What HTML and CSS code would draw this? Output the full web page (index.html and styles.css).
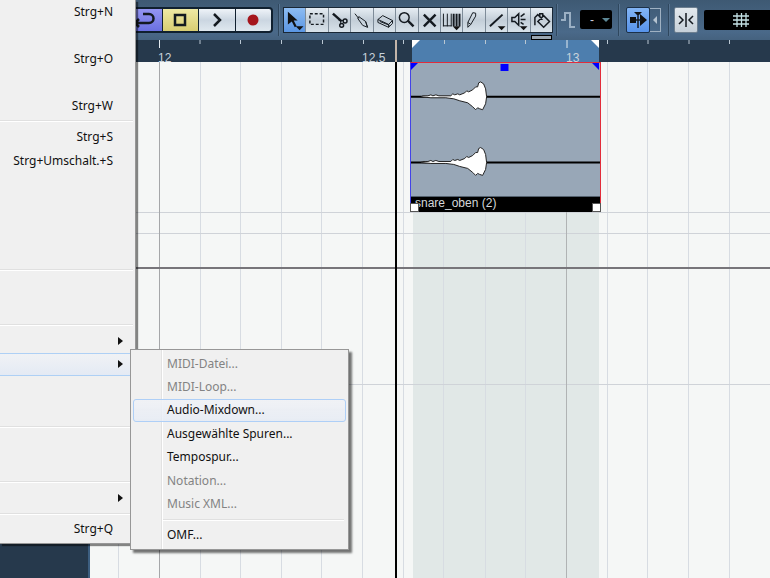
FILE: index.html
```html
<!DOCTYPE html>
<html lang="de">
<head>
<meta charset="utf-8">
<title>Arrangement</title>
<link rel="stylesheet" href="styles.css">
</head>
<body>
<div class="app">
  <header class="toolbar">
    <div class="transport">
      <button class="loop" aria-label="Cycle"><svg width="26" height="19" viewBox="0 0 26 19"><path d="M4 13h14a4 4 0 0 0 0-9H12M8 9l-4 4 4 4" class="s25"/></svg></button>
      <button class="stop" aria-label="Stop"><svg width="14" height="14" viewBox="0 0 14 14"><path d="M2 2h10v10H2z" class="s25"/></svg></button>
      <button class="play" aria-label="Start"><svg width="12" height="14" viewBox="0 0 12 14"><path d="M3 1l6 6-6 6" class="s25"/></svg></button>
      <button class="record" aria-label="Aufnahme"><svg width="12" height="12" viewBox="0 0 12 12"><circle cx="6" cy="6" r="5.500" fill="#a5151c"/></svg></button>
    </div>
    <i class="divider"></i>
    <div class="tools">
      <button class="active" aria-label="Objektauswahl"><svg viewBox="0 0 22 21"><path d="M4 2l10 9H10l3 6-2 1-3-6-4 3z" fill="#111"/><path d="M12 17h8l-4 4z" fill="#111"/></svg></button>
      <button aria-label="Auswahlbereich"><svg viewBox="0 0 22 21"><path d="M4 4h14v11H4z" class="s15" stroke-dasharray="3 2"/></svg></button>
      <button aria-label="Trennen"><svg viewBox="0 0 22 21"><path d="M4 4l9 8" class="s25"/><circle cx="16.500" cy="11.500" r="2" class="s15"/><circle cx="13" cy="16" r="2" class="s15"/><path d="M10 11h5M12 11v4" class="s1"/></svg></button>
      <button aria-label="Kleben"><svg viewBox="0 0 22 21"><path d="M4 4l4 5M8 7l7 5 2 6-5-2-5-7zM15 12l2 6" class="s1"/></svg></button>
      <button aria-label="Löschen"><svg viewBox="0 0 22 21"><path d="M4 10l5-4 10 5-4 4zM4 10v3l11 5v-3M15 18l4-4v-3M6 12l10 4" class="s1"/></svg></button>
      <button aria-label="Zoom"><svg viewBox="0 0 22 21"><circle cx="8.500" cy="8" r="5" class="s15"/><path d="M12 11l6 6" class="s25"/></svg></button>
      <button aria-label="Stummschalten"><svg viewBox="0 0 22 21"><path d="M5 5l12 12M17 5L5 17" class="s25"/></svg></button>
      <button aria-label="Time Warp"><svg viewBox="0 0 22 21"><path d="M2.500 4v13M6.500 4v13M10.500 4v13M2 16.500h9" class="s1"/><path d="M13 4v13M16 4v13M19 4v13" class="s2"/><path d="M12 17h8l-4 4z" fill="#111"/></svg></button>
      <button aria-label="Stift"><svg viewBox="0 0 22 21"><path d="M5 13l5-10 3 .5v3L8 15l-3 3zM5 13l3 2" class="s1"/></svg></button>
      <button aria-label="Linie"><svg viewBox="0 0 22 21"><path d="M4 17L17 5" class="s2"/><path d="M12 17h8l-4 4z" fill="#111"/></svg></button>
      <button aria-label="Wiedergabe"><svg viewBox="0 0 22 21"><path d="M4 8h3l4-4v12l-4-4H4zM13 7l4-3M13 10h5M13 13l3 2" class="s15"/><path d="M12 17h8l-4 4z" fill="#111"/></svg></button>
      <button aria-label="Farbe"><svg viewBox="0 0 22 21"><path d="M7 12l6-6 6 6-6 6zM4 16V8l3-3 5 5M9 8V4h3v3" class="s15"/></svg><span class="swatch"></span></button>
    </div>
    <i class="divider"></i>
    <svg class="pulse" width="16" height="18" viewBox="0 0 16 18"><path d="M1 9h4V2h5v14h5" fill="none" stroke="#9bb0c4" stroke-width="2"/></svg>
    <div class="nudge">
      <select aria-label="Farbe wählen"><option>-</option></select>
      <svg width="8" height="4" viewBox="0 0 8 4"><path d="M0 0h8L4 4z" fill="#5c8796"/></svg>
    </div>
    <i class="divider"></i>
    <button class="key scroll" aria-label="Autoscroll"><svg width="20" height="20" viewBox="0 0 20 20"><path d="M2 7h6v6H2zM12 4l7 6-7 6z" fill="#111"/><path d="M6 2h8l-3 3H9z" fill="#111"/><path d="M10 3v15M8 10h6" class="s15"/></svg></button>
    <button class="suspend" aria-label="Autoscroll anhalten"><svg width="6" height="8" viewBox="0 0 6 8"><path d="M5 0v8L1 4z" fill="#b5c3d0"/></svg></button>
    <i class="divider"></i>
    <button class="key snap" aria-label="Raster"><svg width="18" height="16" viewBox="0 0 18 16"><path d="M9 1v14M2 4l4 4-4 4M16 4l-4 4 4 4" class="s15"/></svg></button>
    <button class="gridtype" aria-label="Rastertyp"><svg width="18" height="16" viewBox="0 0 18 16"><path d="M5 1v14M9.500 1v14M14 1v14M1 4h16M1 8h16M1 12h16" fill="none" stroke="#c3e0e4" stroke-width="1.300"/></svg></button>
  </header>

  <div class="ruler">
    <div class="locator"></div>
    <svg class="marks">
      <path d="M159.500 0v8M567 0v8" stroke="#e4ebf0" stroke-width="1"/>
      <path d="M200 0v4M240.500 0v4M281.500 0v4M322.500 0v4M363.500 0v4M403.500 0v4M444.500 0v4M485.500 0v4M525.500 0v4M607.500 0v4M648 0v4M689 0v4M729.500 0v4" stroke="#b9c7d2"/>
      <path d="M396 0v22" stroke="#c4b6aa" stroke-width="2"/>
      <path d="M412 0h8l-8 8zM599 0h-8l8 8z" fill="#fff"/>
    </svg>
    <span class="bar-12">12</span>
    <span class="bar-12-5">12.5</span>
    <span class="bar-13">13</span>
  </div>

  <main class="workspace">
    <aside class="tracks"></aside>
    <section class="canvas">
      <div class="range"></div>
      <svg class="marks">
        <g transform="translate(-90 0)" shape-rendering="crispEdges">
          <g fill="#d7dce2">
            <rect x="118" width="1" height="100%"/><rect x="200" width="1" height="100%"/><rect x="240" width="1" height="100%"/><rect x="281" width="1" height="100%"/><rect x="321" width="1" height="100%"/><rect x="362" width="1" height="100%"/><rect x="403" width="1" height="100%"/><rect x="443" width="1" height="100%"/><rect x="485" width="1" height="100%"/><rect x="525" width="1" height="100%"/><rect x="607" width="1" height="100%"/><rect x="647" width="1" height="100%"/><rect x="688" width="1" height="100%"/><rect x="729" width="1" height="100%"/>
            <rect x="90" y="150" width="100%" height="1" fill="#cfd3d8"/><rect x="90" y="171" width="100%" height="1" fill="#cfd3d8"/><rect x="90" y="322" width="100%" height="1" fill="#cfd3d8"/>
          </g>
          <rect x="159" width="1" height="100%" fill="#a5a7a9"/><rect x="566" width="1" height="100%" fill="#b0b3b4"/>
          <rect x="90" y="205" width="100%" height="2" fill="#77757a"/>
          <rect x="395" width="2" height="100%" fill="#000"/>
        </g>
      </svg>
      <article class="clip">
        <svg class="wave" viewBox="0 0 190 134">
          <defs><path id="burst" d="M10 0l2-1 3 0 2 0 3-1 2 1 3-1 3 1h12l2-2 2 1 3-1 2 1 5-2 2-2 2 1 4-2 3-3 2 0 1-4 2-1 3 2 2 5 1 8-1 7-3 6-3-1-2-1-2 2-3-3-5-4-8-2-6-2-8-1H20z"/></defs>
          <path d="M0 34h190M0 100h190" stroke="#000" stroke-width="2"/>
          <g fill="#fff" stroke="#222" stroke-width="1"><use href="#burst" y="34"/><use href="#burst" y="100"/></g>
          <path d="M0 0h7l-7 7zM189 0h-7l7 7zM90 1h8v7h-8z" fill="#00f"/>
        </svg>
        <footer class="clip-name">snare_oben (2)</footer>
        <i class="handle start"></i><i class="handle end"></i>
      </article>
    </section>
  </main>

  <nav class="menu">
    <ul class="rows5"><li><button>Strg+N</button></li><li></li><li><button>Strg+O</button></li><li></li><li><button>Strg+W</button></li></ul>
    <hr>
    <ul class="rows6"><li><button>Strg+S</button></li><li><button>Strg+Umschalt.+S</button></li><li></li><li></li><li></li><li></li></ul>
    <hr>
    <ul class="rows2"><li></li><li></li></ul>
    <hr>
    <ul class="rows4"><li><button class="more" aria-label="Importieren"></button></li><li><button class="more open" aria-label="Exportieren"></button></li><li></li><li></li></ul>
    <hr>
    <ul class="rows2"><li></li><li></li></ul>
    <hr>
    <ul class="rows1"><li><button class="more" aria-label="Zuletzt geöffnet"></button></li></ul>
    <hr>
    <ul class="rows1"><li><button>Strg+Q</button></li></ul>
  </nav>

  <nav class="submenu">
    <ul class="rows7">
      <li><button disabled>MIDI-Datei...</button></li>
      <li><button disabled>MIDI-Loop...</button></li>
      <li><button class="hover">Audio-Mixdown...</button></li>
      <li><button>Ausgewählte Spuren...</button></li>
      <li><button>Tempospur...</button></li>
      <li><button disabled>Notation...</button></li>
      <li><button disabled>Music XML...</button></li>
    </ul>
    <hr>
    <ul class="rows1"><li><button>OMF...</button></li></ul>
  </nav>
</div>
</body>
</html>
```
FILE: styles.css
```css
* { box-sizing: border-box; }
body { margin: 0; font-family: "Liberation Sans", Arial, sans-serif; }
button { margin: 0; padding: 0; border: 0; background: none; font: inherit; color: inherit; }
ul { margin: 0; padding: 0; list-style: none; }

.app {
  position: relative;
  display: flex;
  flex-direction: column;
  min-height: 100vh;
  overflow: hidden;
}

.s1, .s15, .s2, .s25 { fill: none; stroke: #141a20; stroke-width: 1; }
.s15 { stroke-width: 1.5; }
.s2 { stroke-width: 2; }
.s25 { stroke-width: 2.5; }

/* Toolbar */
.toolbar {
  display: flex;
  align-items: center;
  height: 40px;
  padding: 0 0 1px 124px;
  background: linear-gradient(#3e5973, #4a6989 80%, #45627f);
}
.toolbar > * { flex: none; }
.toolbar button { display: flex; align-items: center; justify-content: center; }
.divider { width: 2px; height: 32px; background: #2f475e; border-right: 1px solid #54718e; }

.transport {
  display: flex;
  width: 149px;
  height: 26px;
  margin-right: 5px;
  border: 2px solid #10202f;
  border-radius: 4px;
  background: #10202f;
  gap: 1px;
  overflow: hidden;
}
.transport button { flex: 1; background: linear-gradient(#eef3f8, #cbd6e1 50%, #dfe8ef); }
.transport .loop { background: linear-gradient(#9495f2, #6a70e0); }
.transport .stop { background: linear-gradient(#efe9a4, #d8cd72); }

.tools {
  display: flex;
  width: 270px;
  height: 26px;
  margin: 0 3px 0 3px;
  border: 1px solid #192735;
  background: #7e8c99;
  gap: 1px;
}
.tools button { position: relative; flex: 1; background: linear-gradient(#e6edf3, #c3ced8 50%, #d8e2ea); }
.tools .active { background: linear-gradient(#8dbcf2, #5a96e4); }
.tools svg { width: 100%; height: 22px; overflow: visible; }
.swatch {
  position: absolute;
  top: 27px;
  left: 0;
  width: 100%;
  height: 5px;
  border: 1px solid #000;
  background: #9aa6b1;
}

.pulse { margin: 0 4px 0 2px; }
.nudge { position: relative; height: 19px; margin-right: 6px; }
.nudge select {
  appearance: none;
  display: block;
  width: 32px;
  height: 19px;
  padding: 0 10px;
  border: 0;
  border-radius: 2px;
  background: #000;
  color: #ccd;
  font: 12px "Liberation Sans", Arial, sans-serif;
}
.nudge svg { position: absolute; top: 8px; right: 2px; pointer-events: none; }
.key { width: 24px; height: 26px; border-radius: 2px; }
.key.scroll { margin-left: 6px; border: 1px solid #1c3149; background: linear-gradient(#83b5f5, #5793ea); }
.key.snap { margin-left: 4px; border: 1px solid #6d7f90; background: linear-gradient(#e3e9ee, #c6d0d9); }
.suspend { width: 11px; height: 24px; border: 1px solid #9fb1c2; border-left: 0; }
.toolbar .suspend { margin-right: 7px; }
.toolbar .gridtype { flex: 1; height: 20px; min-width: 66px; margin-left: 6px; padding-left: 8px; border-radius: 2px 0 0 2px; background: #000; }

/* Ruler */
.ruler { position: relative; height: 22px; background: #26394c; color: #c9d3dc; font-size: 12px; line-height: 14px; }
.ruler span { position: absolute; top: 11px; }
.bar-12 { left: 158px; }
.bar-12-5 { left: 362px; }
.bar-13 { left: 566px; }
.locator { position: absolute; left: 412px; width: 187px; height: 100%; background: #4d7eae; }
.marks { position: absolute; inset: 0; width: 100%; height: 100%; overflow: hidden; }

/* Arrangement */
.workspace { display: flex; flex: 1; }
.tracks { flex: none; width: 90px; background: #26394c; border-right: 2px solid #3c5e80; }
.canvas { position: relative; flex: 1; overflow: hidden; background: #f5f7f6; }
.range { position: absolute; left: 323px; width: 186px; height: 100%; background: #e1e8e7; }
.clip {
  position: absolute;
  left: 320px;
  top: 0;
  width: 191px;
  border: 1px solid #e22c3a;
  border-left-color: #4343e8;
  border-bottom: 1px solid #000;
  background: #98a7b7;
}
.wave { display: block; width: 100%; }
.clip-name {
  height: 15px;
  padding-left: 4px;
  border-top: 1px solid #53606d;
  background: #000;
  color: #d5d8da;
  font-size: 12px;
  line-height: 13px;
}
.handle { position: absolute; bottom: -1px; width: 9px; height: 9px; border: 1px solid #555; background: #fff; }
.start { left: -1px; }
.end { right: -1px; }

/* Menus */
.menu, .submenu {
  position: absolute;
  display: flex;
  flex-direction: column;
  background: #f0f0f0;
  color: #111;
  font: 12px/16px "Noto Sans", "Open Sans", sans-serif;
}
.menu { top: 0; left: 0; width: 136px; height: 544px; padding: 0 2px 2px 0; border: solid #979797; border-width: 0 1px 1px 0; box-shadow: 2px 2px 1px #0007; }
.submenu { top: 349px; left: 130px; width: 219px; height: 201px; padding: 2px; border: 1px solid #979797; box-shadow: 3px 3px 2px #0008; background: linear-gradient(90deg, #f0f0f0 30px, #e2e2e2 30px 31px, #fff 31px 32px, #f0f0f0 32px); }
.menu ul, .submenu ul { display: grid; grid-auto-rows: 1fr; }
.rows1 { flex: 1; }
.rows2 { flex: 2; }
.rows4 { flex: 4; }
.rows5 { flex: 5; }
.rows6 { flex: 6; }
.rows7 { flex: 7; }
.menu hr, .submenu hr { flex: none; width: 100%; height: 2px; margin: 3px 0; border: 0; background: linear-gradient(#e0e0e0 50%, #fff 50%); }
.submenu hr { width: auto; margin: 3px 2px 3px 30px; }
.menu li, .submenu li { display: flex; }
.menu button { width: 100%; padding-right: 20px; text-align: right; }
.menu .more { display: flex; align-items: center; justify-content: flex-end; padding-right: 10px; }
.more::after { content: ""; border: 4px solid transparent; border-left: 5px solid #111; border-right: 0; }
.menu .open { border: solid #aed0f5; border-width: 1px 0; background: linear-gradient(#f0f2f5, #e4eaf4); }
.submenu button { width: 100%; padding: 0 0 0 33px; border: 1px solid transparent; text-align: left; }
.submenu button:disabled { color: #838383; }
.submenu .hover { border-color: #aecff7; border-radius: 3px; background: linear-gradient(#f0f2f6e0, #e5ebf5c0); }
```
